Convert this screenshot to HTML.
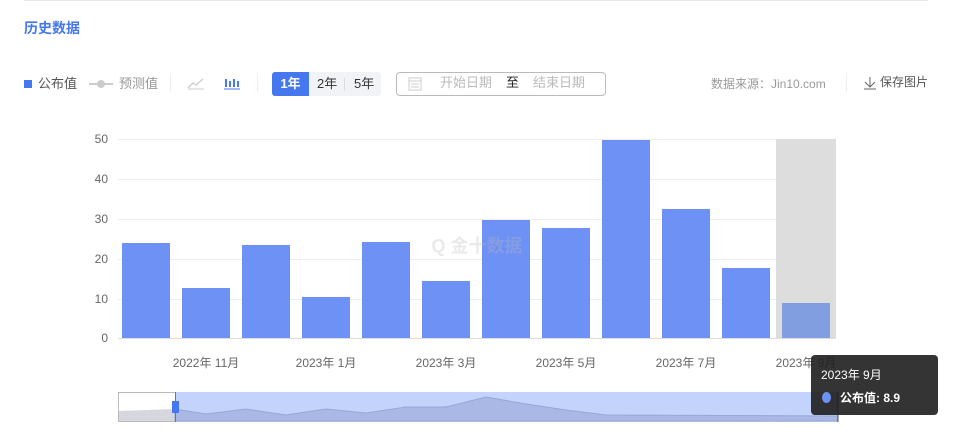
<!DOCTYPE html>
<html><head><meta charset="utf-8"><style>
body{margin:0;width:954px;height:443px;background:#fff;font-family:"Liberation Sans","Noto Sans CJK SC",sans-serif;position:relative;overflow:hidden}
.a{position:absolute;white-space:nowrap}
.t{line-height:24px;top:72px}
</style></head><body>
<div class="a" style="left:24px;top:0;width:904px;height:1px;background:#e8e8e8"></div>
<div class="a" style="left:24px;top:18px;font-size:14px;color:#4577ee;font-weight:bold;line-height:20px">历史数据</div>
<div class="a" style="left:24px;top:80px;width:8px;height:8px;background:#4577ee"></div>
<div class="a t" style="left:38px;font-size:13px;color:#555">公布值</div>
<div class="a" style="left:89px;top:83px;width:24px;height:2px;background:#ccc"></div>
<div class="a" style="left:97px;top:80px;width:8px;height:8px;border-radius:50%;background:#ccc"></div>
<div class="a t" style="left:119px;font-size:13px;color:#999">预测值</div>
<div class="a" style="left:170px;top:74px;width:1px;height:18px;background:#eee"></div>
<svg class="a" style="left:187px;top:76px" width="18" height="14"><path d="M1 12 L6 7 L9 9 L16 3" stroke="#ccc" fill="none" stroke-width="1.3"/><path d="M1 13H17" stroke="#ccc"/></svg>
<svg class="a" style="left:223px;top:76px" width="18" height="14"><path d="M3 3V11M7 5V11M11 3V11M15 5V11" stroke="#4577ee" stroke-width="2"/><path d="M1 13H17" stroke="#4577ee"/></svg>
<div class="a" style="left:257px;top:74px;width:1px;height:18px;background:#eee"></div>
<div class="a" style="left:272px;top:72px;width:109px;height:24px;background:#f2f3f7;border-radius:3px"></div>
<div class="a" style="left:272px;top:72px;width:37px;height:24px;background:#4577ee;border-radius:3px 0 0 3px;color:#fff;font-size:13px;font-weight:bold;line-height:24px;text-align:center">1年</div>
<div class="a t" style="left:317px;font-size:13px;color:#333">2年</div>
<div class="a" style="left:344px;top:78px;width:1px;height:13px;background:#ddd"></div>
<div class="a t" style="left:354px;font-size:13px;color:#333">5年</div>
<div class="a" style="left:396px;top:72px;width:208px;height:22px;border:1px solid #bbb;border-radius:4px"></div>
<svg class="a" style="left:408px;top:76px" width="14" height="15"><rect x="1" y="2" width="12" height="12" fill="none" stroke="#ccc"/><path d="M1 5H13M3 8H11M3 11H11" stroke="#ccc"/></svg>
<div class="a" style="left:440px;top:71px;line-height:24px;font-size:13px;color:#bbb">开始日期</div>
<div class="a" style="left:506px;top:71px;line-height:24px;font-size:13px;color:#222">至</div>
<div class="a" style="left:533px;top:71px;line-height:24px;font-size:13px;color:#bbb">结束日期</div>
<div class="a" style="left:711px;top:72px;line-height:24px;font-size:12px;color:#999">数据来源：Jin10.com</div>
<div class="a" style="left:846px;top:74px;width:1px;height:18px;background:#eee"></div>
<svg class="a" style="left:863px;top:76px" width="14" height="14"><path d="M7 1V11M2 6L7 11L12 6M1 13H13" stroke="#666" fill="none"/></svg>
<div class="a" style="left:880px;top:70px;line-height:24px;font-size:12px;color:#555">保存图片</div>
<svg class="a" style="left:0;top:0" width="954" height="443" font-family="Liberation Sans,Noto Sans CJK SC,sans-serif">
<g stroke="#eee"><path d="M118 139.5H836M118 179.5H836M118 219.5H836M118 259.5H836M118 299.5H836"/></g>
<path d="M118 338.5H836" stroke="#ddd"/>
<g font-size="12" fill="#666" text-anchor="end"><text x="108" y="143">50</text><text x="108" y="183">40</text><text x="108" y="223">30</text><text x="108" y="263">20</text><text x="108" y="303">10</text><text x="108" y="342">0</text></g>
<rect x="776" y="139" width="60" height="199" fill="#ddd"/>
<g fill="#6d91f5">
<rect x="122" y="243" width="48" height="95"/><rect x="182" y="288" width="48" height="50"/><rect x="242" y="245" width="48" height="93"/><rect x="302" y="297" width="48" height="41"/><rect x="362" y="242" width="48" height="96"/><rect x="422" y="281" width="48" height="57"/><rect x="482" y="220" width="48" height="118"/><rect x="542" y="228" width="48" height="110"/><rect x="602" y="140" width="48" height="198"/><rect x="662" y="209" width="48" height="129"/><rect x="722" y="268" width="48" height="70"/><rect x="782" y="303" width="48" height="35" fill="#809ee0"/>
</g>
<text x="477" y="252" font-size="18" fill="#bbb" fill-opacity=".3" text-anchor="middle" font-weight="bold">Q 金十数据</text>
<g font-size="12" fill="#666" text-anchor="middle"><text x="206" y="367">2022年 11月</text><text x="326" y="367">2023年 1月</text><text x="446" y="367">2023年 3月</text><text x="566" y="367">2023年 5月</text><text x="686" y="367">2023年 7月</text><text x="806" y="367">2023年 9月</text></g>
<rect x="118.5" y="392.5" width="720" height="29" fill="#fff" stroke="#bbb"/>
<path d="M119 411L175 409L206 414L246 409L286 415L326 409L366 413L406 407L446 407L486 397L526 404L566 410L606 415L838 416V421H119Z" fill="#d6d7de"/>
<rect x="175" y="392" width="663" height="30" fill="#c4d3fb"/>
<path d="M175 409L206 414L246 409L286 415L326 409L366 413L406 407L446 407L486 397L526 404L566 410L606 415L838 416V421H175Z" fill="#a9b8e4" stroke="#97a7d6"/>
<path d="M175.5 392V422M837.5 392V422" stroke="#4577ee"/>
<rect x="172" y="401" width="7" height="12" fill="#4577ee"/>
</svg>
<div class="a" style="left:811px;top:355px;width:127px;height:60px;background:rgba(30,30,30,.9);border-radius:4px"></div>
<div class="a" style="left:821px;top:366px;font-size:12px;color:#fff">2023年 9月</div>
<div class="a" style="left:822px;top:392px;width:9px;height:11px;border-radius:50%;background:#6d91f5"></div>
<div class="a" style="left:840px;top:389px;font-size:12px;color:#fff;font-weight:bold">公布值: 8.9</div>
</body></html>
